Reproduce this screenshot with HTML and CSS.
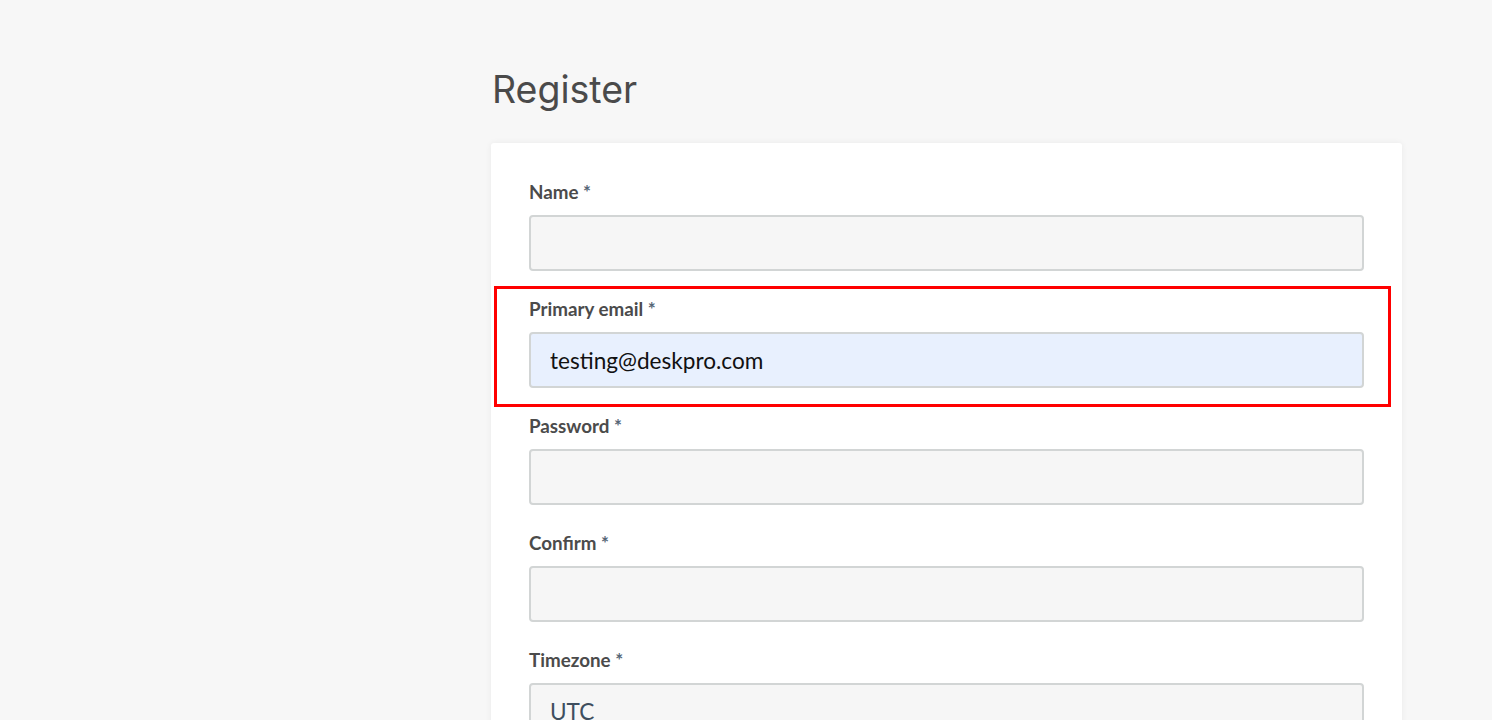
FILE: index.html
```html
<!DOCTYPE html>
<html lang="en">
<head>
<meta charset="utf-8">
<title>Register</title>
<link rel="stylesheet" href="styles.css">
</head>
<body>
<main class="page">
  <h1 class="title">Register</h1>
  <form class="card">
    <div class="field">
      <label class="label">Name <span class="req">*</span></label>
      <input class="input" type="text">
    </div>
    <div class="field">
      <label class="label">Primary email <span class="req">*</span></label>
      <input class="input input-filled" type="text" value="testing@deskpro.com">
    </div>
    <div class="field">
      <label class="label">Password <span class="req">*</span></label>
      <input class="input" type="password">
    </div>
    <div class="field">
      <label class="label">Confirm <span class="req">*</span></label>
      <input class="input" type="password">
    </div>
    <div class="field">
      <label class="label">Timezone <span class="req">*</span></label>
      <div class="input select">UTC</div>
    </div>
    <div class="highlight"></div>
  </form>
</main>
</body>
</html>
```
FILE: styles.css
```css
* { box-sizing: border-box; }
html, body { margin: 0; padding: 0; }
body {
  background: #f7f7f7;
  font-family: "Lato", "Liberation Sans", sans-serif;
  color: #4b4b4b;
  height: 720px;
  overflow: hidden;
}
.page {
  padding: 68px 0 0 491px;
  width: 1402px;
}
.title {
  margin: 0 0 31px 1px;
  font-family: "Inter", "Noto Sans", sans-serif;
  font-weight: 400;
  font-size: 37.5px;
  line-height: 44px;
  color: #4a4a4a;
}
.card {
  position: relative;
  background: #fff;
  box-shadow: 0 0 6px rgba(0,0,0,0.06);
  border-radius: 3px;
  padding: 37px 38px 30px 38px;
  width: 911px;
}
.field {
  display: flex;
  flex-direction: column;
  margin-bottom: 26px;
}
.label {
  font-weight: 700;
  font-size: 18.8px;
  line-height: 23px;
  margin-bottom: 12px;
  color: #4b4b4b;
}
.req { color: #566676; font-weight: 700; }
.input {
  height: 56px;
  width: 835px;
  border: 2px solid #d2d5d5;
  border-radius: 4px;
  background: #f6f6f6;
  font-family: "Lato", "Liberation Sans", sans-serif;
  font-size: 22.6px;
  color: #111;
  padding: 0 19px;
  outline: none;
}
.input-filled { background: #e8f0fe; }
.select {
  display: flex;
  align-items: center;
  color: #3e4e5e;
}
.highlight {
  position: absolute;
  left: 3px;
  top: 143px;
  width: 897px;
  height: 121px;
  border: 3px solid #ff0000;
  pointer-events: none;
}
```
